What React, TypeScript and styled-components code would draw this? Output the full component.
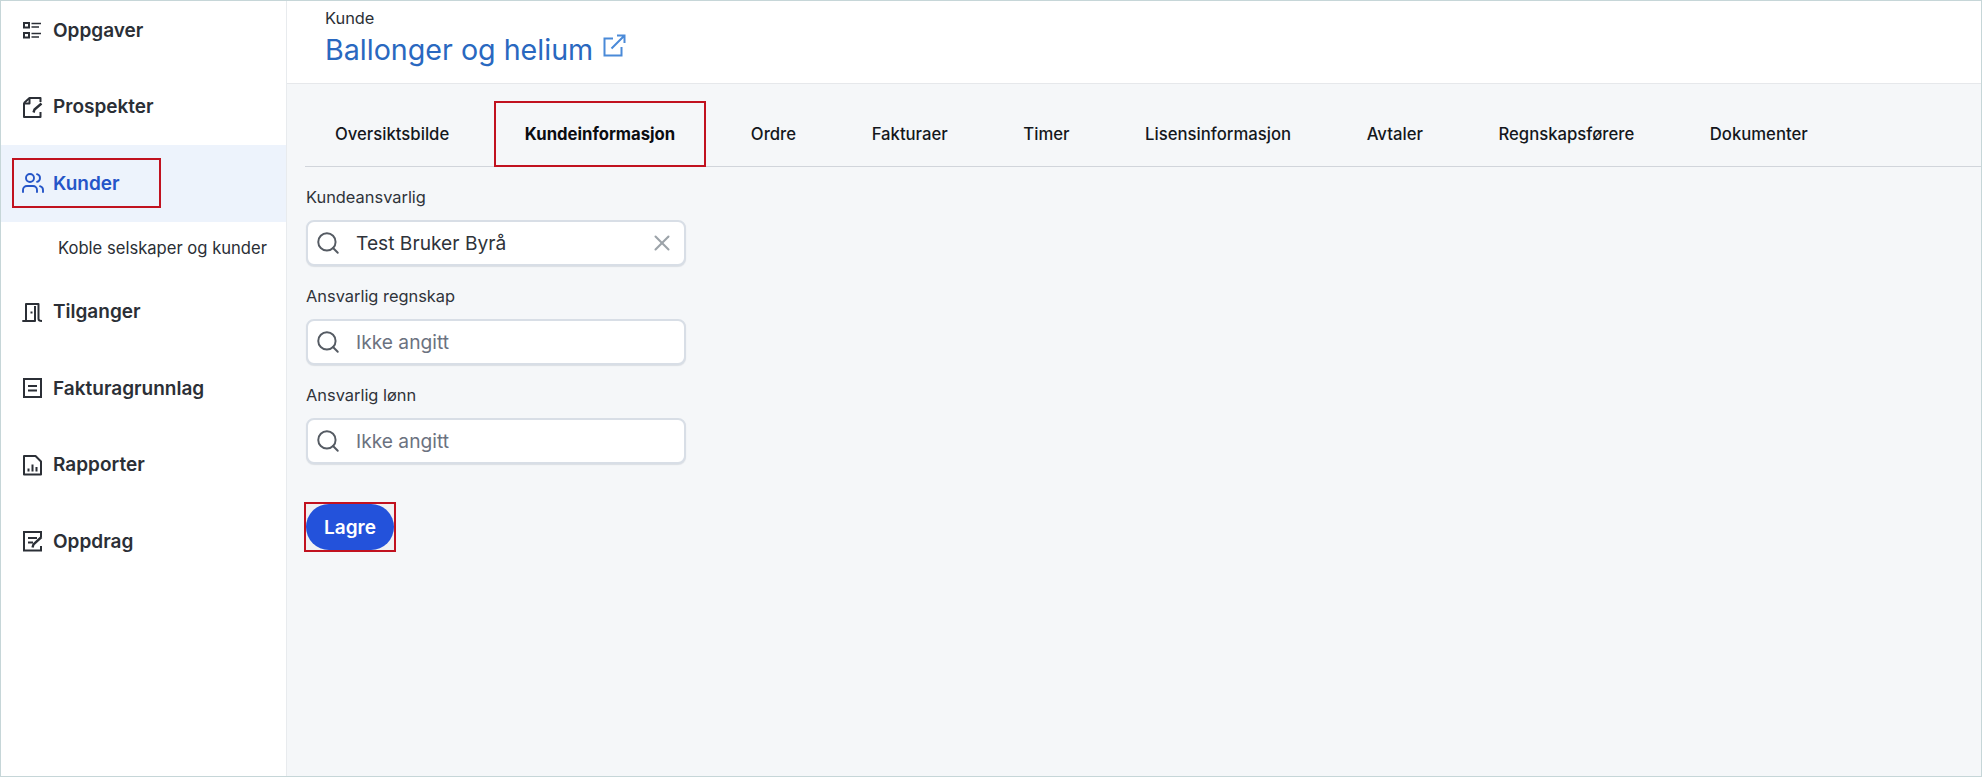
import React from "react";
import styled, { createGlobalStyle } from "styled-components";
import { Search, X, Users } from "lucide-react";

const Global = createGlobalStyle`
  html, body { margin: 0; padding: 0; height: 100%; }
  body { font-family: Inter, "Liberation Sans", sans-serif; background: #fff; overflow: hidden; }
  * { box-sizing: border-box; }
`;

const Frame = styled.div`
  width: 1982px;
  height: 777px;
  display: flex;
  overflow: hidden;
  border: 1px solid #c6d6d8;
`;

const Sidebar = styled.nav`
  width: 286px;
  flex: none;
  background: #fff;
  border-right: 1px solid #e8ebee;
  overflow: hidden;
`;

const NavList = styled.div`
  display: flex;
  flex-direction: column;
  margin-top: -9px;
`;

const NavRow = styled.a<{ $active?: boolean }>`
  height: 76.5px;
  flex: none;
  padding-left: 20px;
  display: flex;
  align-items: center;
  gap: 10px;
  font-size: 19px;
  font-weight: 600;
  color: ${(p) => (p.$active ? "#2555c8" : "#2b2f36")};
  background: ${(p) => (p.$active ? "#edf3fc" : "transparent")};
  svg { flex: none; }
`;

const ActiveMark = styled.span`
  display: flex;
  align-items: center;
  gap: 8px;
  width: 149px;
  height: 50px;
  margin-left: -9px;
  padding-left: 7px;
  border: 2px solid #c1121f;
`;

const SubRow = styled.a`
  height: 52px;
  flex: none;
  padding-left: 57px;
  display: flex;
  align-items: center;
  font-size: 16.6px;
  font-weight: 400;
  color: #2b2f36;
`;

const Main = styled.main`
  flex: 1;
  min-width: 0;
  background: #f5f7f9;
  display: flex;
  flex-direction: column;
`;

const Header = styled.header`
  height: 83px;
  flex: none;
  background: #fff;
  border-bottom: 1px solid #e6e8eb;
  padding: 7px 0 0 38px;
`;

const Eyebrow = styled.div`
  font-size: 16.4px;
  line-height: 20px;
  color: #2b2f36;
`;

const TitleRow = styled.div`
  display: flex;
  align-items: flex-start;
  gap: 9px;
  margin-top: 2px;
`;

const Title = styled.h1`
  margin: 0;
  font-size: 28.65px;
  line-height: 40px;
  font-weight: 400;
  color: #2968c0;
`;

const Content = styled.div`
  padding: 18px 0 0 19px;
`;

const Tabs = styled.div`
  display: flex;
  height: 65px;
  gap: 15.6px;
  margin-left: -1px;
  border-bottom: 1px solid #d1d5db;
`;

const Tab = styled.a<{ $active?: boolean }>`
  padding: 0 30px 1px;
  display: flex;
  align-items: center;
  font-size: 16.7px;
  font-weight: ${(p) => (p.$active ? 700 : 500)};
  color: ${(p) => (p.$active ? "#0b0d11" : "#14171c")};
  outline: ${(p) => (p.$active ? "2px solid #c1121f" : "none")};
  outline-offset: -1px;
`;

const Form = styled.div`
  width: 380px;
  display: flex;
  flex-direction: column;
  padding-top: 20px;
`;

const Field = styled.div`
  display: flex;
  flex-direction: column;
  gap: 13px;
  margin-bottom: 20px;
`;

const Label = styled.label`
  font-size: 16.4px;
  line-height: 20px;
  color: #2f333a;
`;

const InputBox = styled.div`
  height: 46px;
  background: #fff;
  border: 2px solid #d8dee6;
  border-radius: 8px;
  box-shadow: 0 1px 1px rgba(120, 130, 145, 0.2);
  display: flex;
  align-items: center;
  padding: 0 9px 0 7px;
  gap: 15px;
  svg { flex: none; }
`;

const InputText = styled.span<{ $placeholder?: boolean }>`
  flex: 1;
  font-size: 19.2px;
  color: ${(p) => (p.$placeholder ? "#6b7280" : "#2f333a")};
`;

const SaveMark = styled.div`
  align-self: flex-start;
  margin: 18px 0 0 -2px;
  width: 92px;
  height: 50px;
  border: 2px solid #c1121f;
  display: flex;
  align-items: center;
  justify-content: center;
  background: #f0f1f3;
`;

const SaveButton = styled.button`
  width: 88px;
  height: 46px;
  padding: 0;
  border: 0;
  border-radius: 23px;
  background: #2352db;
  color: #fff;
  font-family: inherit;
  font-size: 19px;
  font-weight: 600;
`;

const Ico: React.FC<{ children: React.ReactNode }> = ({ children }) => (
  <svg width="22" height="24" viewBox="0 0 22 24" fill="none" stroke="currentColor" strokeWidth="2">
    {children}
  </svg>
);

const TaskIcon = () => (
  <Ico>
    <rect x="3" y="5" width="5" height="4.5" />
    <rect x="3" y="15" width="5" height="4.5" />
    <path d="M10.5 5.5H20M10.5 9H18M10.5 15.5H20M10.5 19H18" strokeWidth="1.7" />
  </Ico>
);
const ProspectIcon = () => (
  <Ico>
    <path d="M3 8L8.5 3H19.5V7" strokeLinejoin="round" />
    <path d="M8.5 3V8.5H3V22H19.5V17" strokeLinejoin="round" />
    <path d="M12.5 17.5L13.5 14.5L20.5 8.5" strokeWidth="2.4" />
  </Ico>
);
const DoorIcon = () => (
  <Ico>
    <path d="M1.3 21H14V6M5 21V4H17.5V19q0 2 3.5 2" strokeLinejoin="round" />
    <path d="M10.5 11.5v2" />
  </Ico>
);
const InvoiceIcon = () => (
  <Ico>
    <rect x="3" y="3" width="17" height="18" />
    <path d="M7 10h9M7 14.5h9" />
  </Ico>
);
const ReportIcon = () => (
  <Ico>
    <path d="M3 3h11.5l5.5 5.5V21.5H3z" strokeLinejoin="round" />
    <path d="M7.5 18.5v-3M11.5 18.5v-7M15.5 18.5v-4.5" />
  </Ico>
);
const AssignIcon = () => (
  <Ico>
    <path d="M20 8V3H3v18.5h17V17" />
    <path d="M7 9h9M7 13.5h5" />
    <path d="M11.5 18.5l1-3.2L20.5 8" strokeWidth="2.4" />
  </Ico>
);
const OutLinkIcon = () => (
  <svg width="24" height="24" viewBox="0 0 24 24" fill="none" stroke="#4a8ad8" strokeWidth="2" style={{ marginTop: 4 }}>
    <path d="M11 4.5H2.5v17h17V13" />
    <path d="M9.5 14.5L22 2M15 1.5h7.5V9" />
  </svg>
);

const navTop = [
  { label: "Oppgaver", icon: <TaskIcon /> },
  { label: "Prospekter", icon: <ProspectIcon /> },
];
const navBottom = [
  { label: "Tilganger", icon: <DoorIcon /> },
  { label: "Fakturagrunnlag", icon: <InvoiceIcon /> },
  { label: "Rapporter", icon: <ReportIcon /> },
  { label: "Oppdrag", icon: <AssignIcon /> },
];
const tabs = ["Oversiktsbilde", "Kundeinformasjon", "Ordre", "Fakturaer", "Timer", "Lisensinformasjon", "Avtaler", "Regnskapsførere", "Dokumenter"];

const SelectField: React.FC<{ label: string; value?: string }> = ({ label, value }) => (
  <Field>
    <Label>{label}</Label>
    <InputBox>
      <Search size={26} color="#555b63" strokeWidth={1.8} />
      <InputText $placeholder={!value}>{value ?? "Ikke angitt"}</InputText>
      {value && <X size={26} color="#9ca3a9" strokeWidth={1.9} />}
    </InputBox>
  </Field>
);

export default function App() {
  return (
    <>
      <Global />
      <Frame>
        <Sidebar>
          <NavList>
            {navTop.map((n) => (
              <NavRow key={n.label}>
                {n.icon}
                {n.label}
              </NavRow>
            ))}
            <NavRow $active>
              <ActiveMark>
                <Users size={24} strokeWidth={1.9} />
                Kunder
              </ActiveMark>
            </NavRow>
            <SubRow>Koble selskaper og kunder</SubRow>
            {navBottom.map((n) => (
              <NavRow key={n.label}>
                {n.icon}
                {n.label}
              </NavRow>
            ))}
          </NavList>
        </Sidebar>
        <Main>
          <Header>
            <Eyebrow>Kunde</Eyebrow>
            <TitleRow>
              <Title>Ballonger og helium</Title>
              <OutLinkIcon />
            </TitleRow>
          </Header>
          <Content>
            <Tabs>
              {tabs.map((t) => (
                <Tab key={t} $active={t === "Kundeinformasjon"}>
                  {t}
                </Tab>
              ))}
            </Tabs>
            <Form>
              <SelectField label="Kundeansvarlig" value="Test Bruker Byrå" />
              <SelectField label="Ansvarlig regnskap" />
              <SelectField label="Ansvarlig lønn" />
              <SaveMark>
                <SaveButton>Lagre</SaveButton>
              </SaveMark>
            </Form>
          </Content>
        </Main>
      </Frame>
    </>
  );
}
